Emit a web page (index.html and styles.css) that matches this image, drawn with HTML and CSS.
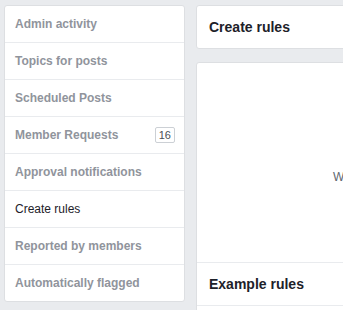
FILE: index.html
```html
<!DOCTYPE html>
<html>
<head>
<meta charset="utf-8">
<link rel="stylesheet" href="styles.css">
</head>
<body>
<div class="page">
  <nav class="side">
    <div class="item">Admin activity</div>
    <div class="item">Topics for posts</div>
    <div class="item">Scheduled Posts</div>
    <div class="item"><span>Member Requests</span><span class="badge">16</span></div>
    <div class="item">Approval notifications</div>
    <div class="item active">Create rules</div>
    <div class="item">Reported by members</div>
    <div class="item">Automatically flagged</div>
  </nav>
  <main class="main">
    <div class="card header">Create rules</div>
    <div class="card body">
      <div class="empty"><p class="msg">When you create rules for your group, they'll appear here.</p></div>
      <div class="section">Example rules</div>
      <div class="rest"></div>
    </div>
  </main>
</div>
</body>
</html>
```
FILE: styles.css
```css
html, body {
  margin: 0;
  padding: 0;
  background: #e9ebee;
  overflow: hidden;
  font-family: "Liberation Sans", Arial, sans-serif;
}
.page {
  display: flex;
  align-items: flex-start;
  gap: 11px;
  padding: 5px 0 0 4px;
  width: 800px;
}
.side {
  flex: none;
  width: 179px;
  background: #fff;
  border: 1px solid #dddfe2;
  border-radius: 3px;
}
.item {
  height: 36px;
  display: flex;
  align-items: center;
  justify-content: space-between;
  padding: 0 9px 0 10px;
  font-size: 12px;
  font-weight: bold;
  color: #90949c;
  border-bottom: 1px solid #e9ebee;
}
.item:last-child {
  border-bottom: none;
}
.item.active {
  color: #1d2129;
  font-weight: normal;
}
.badge {
  font-size: 11px;
  font-weight: normal;
  color: #4b4f56;
  border: 1px solid #ccd0d5;
  border-radius: 2px;
  padding: 0 3px;
  height: 14px;
  line-height: 14px;
}
.main {
  flex: none;
  width: 560px;
  display: flex;
  flex-direction: column;
  gap: 13px;
}
.card {
  background: #fff;
  border: 1px solid #dddfe2;
  border-radius: 3px;
}
.header {
  height: 42px;
  display: flex;
  align-items: center;
  padding-left: 12px;
  font-size: 14px;
  font-weight: bold;
  color: #1d2129;
}
.empty {
  height: 200px;
  box-sizing: border-box;
  padding: 107px 0 0 136px;
  border-bottom: 1px solid #e9ebee;
}
.msg {
  margin: 0;
  font-size: 12px;
  color: #606770;
  white-space: nowrap;
}
.section {
  height: 42px;
  display: flex;
  align-items: center;
  padding-left: 12px;
  font-size: 14px;
  font-weight: bold;
  color: #1d2129;
  border-bottom: 1px solid #e9ebee;
}
.rest {
  height: 60px;
}
```
